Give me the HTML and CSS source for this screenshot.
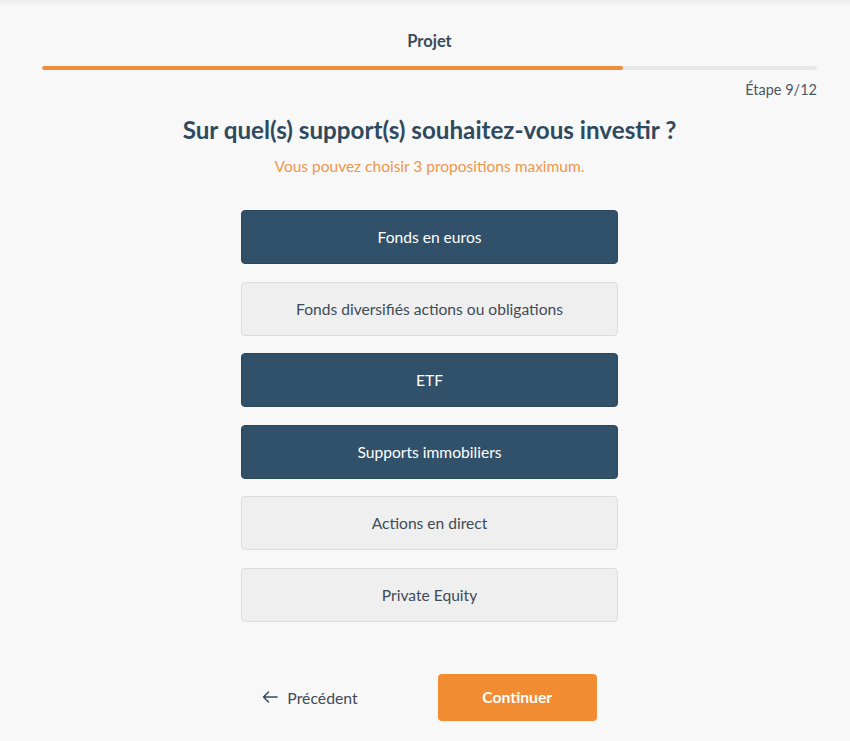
FILE: index.html
```html
<!DOCTYPE html>
<html lang="fr">
<head>
<meta charset="utf-8">
<title>Projet</title>
<link rel="stylesheet" href="styles.css">
</head>
<body>
<div class="topshade"></div>
<main class="page">
  <header class="head">
    <div class="section-name">Projet</div>
    <div class="progress"><div class="progress-fill" style="width: 75%"></div></div>
    <div class="step">Étape 9/12</div>
  </header>

  <h1 class="question">Sur quel(s) support(s) souhaitez-vous investir ?</h1>
  <p class="hint">Vous pouvez choisir 3 propositions maximum.</p>

  <div class="choices">
    <button class="choice selected">Fonds en euros</button>
    <button class="choice">Fonds diversifiés actions ou obligations</button>
    <button class="choice selected">ETF</button>
    <button class="choice selected">Supports immobiliers</button>
    <button class="choice">Actions en direct</button>
    <button class="choice">Private Equity</button>
  </div>

  <div class="nav">
    <button class="back">
      <svg width="16" height="12" viewBox="0 0 16 12" fill="none" stroke="#34495e" stroke-width="1.5" stroke-linecap="round" stroke-linejoin="round"><path d="M15 6H1.5M6.5 1L1.5 6l5 5"/></svg>
      Précédent
    </button>
    <button class="next">Continuer</button>
  </div>
</main>
</body>
</html>
```
FILE: styles.css
```css
html, body {
  margin: 0;
  padding: 0;
  background: #f8f8f8;
  font-family: Lato, "Open Sans", sans-serif;
  color: #34495e;
}

.topshade {
  height: 6px;
  background: linear-gradient(#ececec, rgba(248, 248, 248, 0));
  position: absolute;
  top: 0;
  left: 0;
  right: 0;
}

.page {
  padding: 0 33px 0 42px;
  display: flex;
  flex-direction: column;
  align-items: center;
}

.head {
  align-self: stretch;
  display: flex;
  flex-direction: column;
}

.section-name {
  text-align: center;
  font-weight: 700;
  font-size: 16.5px;
  color: #3b4a58;
  padding-top: 31px;
  line-height: 20px;
}

.progress {
  margin-top: 15px;
  height: 4px;
  background: #e9e9e9;
  border-radius: 2px;
  overflow: hidden;
}

.progress-fill {
  height: 100%;
  background: #ee8d3c;
  border-radius: 2px;
}

.step {
  text-align: right;
  font-size: 14.5px;
  color: #4b5663;
  margin-top: 11px;
  line-height: 18px;
}

.question {
  margin: 16px 0 0;
  font-size: 24.2px;
  font-weight: 700;
  color: #2f4a5e;
  line-height: 30px;
}

.hint {
  margin: 11px 0 0;
  font-size: 15.5px;
  color: #ee964b;
  line-height: 20px;
}

.choices {
  margin-top: 34px;
  display: flex;
  flex-direction: column;
  gap: 17.6px;
  width: 377px;
}

.choice {
  height: 54px;
  border-radius: 4px;
  border: 1px solid #dcdcdc;
  background: #efefef;
  color: #3f4b57;
  font-family: inherit;
  font-size: 15.6px;
  cursor: pointer;
}

.choice.selected {
  background: #31516a;
  border-color: #2a475c;
  color: #ffffff;
}

.nav {
  margin-top: 52px;
  display: flex;
  align-items: center;
}

.back {
  background: none;
  border: none;
  font-family: inherit;
  font-size: 15.8px;
  color: #3f4b57;
  display: flex;
  align-items: center;
  gap: 9px;
  padding: 0 80px 0 0;
  cursor: pointer;
}

.next {
  width: 159px;
  height: 47px;
  border: none;
  border-radius: 4px;
  background: #f28c33;
  color: #fff;
  font-family: inherit;
  font-size: 15.7px;
  font-weight: 700;
  cursor: pointer;
}
```
